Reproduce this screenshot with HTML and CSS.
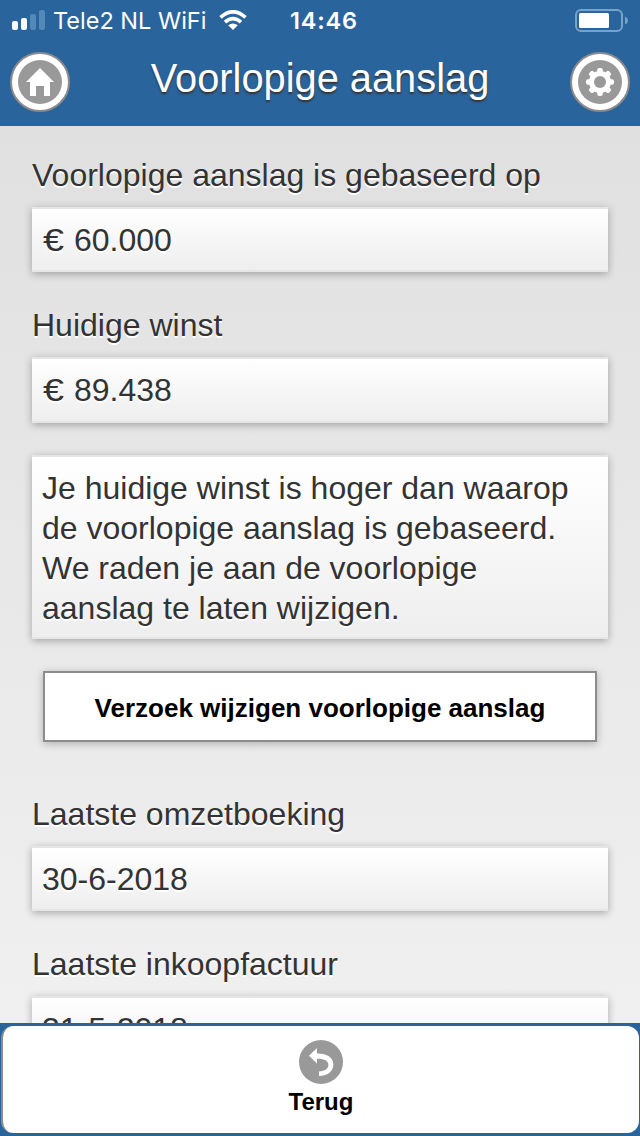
FILE: index.html
```html
<!DOCTYPE html>
<html lang="nl">
<head>
<meta charset="utf-8">
<title>Voorlopige aanslag</title>
<link rel="stylesheet" href="styles.css">
</head>
<body>
<div class="app">
  <header class="header">
    <div class="status">
      <svg class="signal" width="34" height="20" viewBox="0 0 34 20">
        <rect x="0" y="11" width="6" height="9" rx="2" fill="#fff"/>
        <rect x="9" y="8" width="6" height="12" rx="2" fill="#fff"/>
        <rect x="18" y="4" width="6" height="16" rx="2" fill="#5389b9"/>
        <rect x="27" y="0" width="6" height="20" rx="2" fill="#5389b9"/>
      </svg>
      <span class="carrier">Tele2 NL WiFi</span>
      <svg class="wifi" width="28" height="20" viewBox="0 0 28 20">
        <path d="M14 20 L9.2 15.3 Q14 11.5 18.8 15.3Z" fill="#fff"/>
        <path d="M1.5 7.4 Q14 -3.8 26.5 7.4 M6 12.2 Q14 5.2 22 12.2" fill="none" stroke="#fff" stroke-width="3.6"/>
      </svg>
      <span class="time">14:46</span>
      <svg class="battery" width="54" height="23" viewBox="0 0 54 23">
        <rect x="1" y="1" width="46" height="21" rx="5" fill="none" stroke="#75a3ca" stroke-width="2"/>
        <rect x="4" y="4" width="30" height="15" rx="1.5" fill="#fff"/>
        <path d="M50 7.5 Q53 9 53 11.5 Q53 14 50 15.5Z" fill="#75a3ca"/>
      </svg>
    </div>
    <div class="titlebar">
      <svg class="round" width="60" height="60" viewBox="0 0 60 60">
        <circle cx="30" cy="30" r="29" fill="#fff" stroke="#8b8b8b" stroke-width="2"/>
        <circle cx="30" cy="30" r="22" fill="#999"/>
        <path d="M30 16 L44 30 H40 V44 H34 V34 H26 V44 H20 V30 H16Z" fill="#fff"/>
      </svg>
      <h1 class="title">Voorlopige aanslag</h1>
      <svg class="round" width="60" height="60" viewBox="0 0 60 60">
        <circle cx="30" cy="30" r="29" fill="#fff" stroke="#8b8b8b" stroke-width="2"/>
        <circle cx="30" cy="30" r="22" fill="#999"/>
        <g fill="#fff">
          <circle cx="30" cy="30" r="11"/>
          <rect x="27.2" y="16" width="5.6" height="28" rx="2"/>
          <rect x="27.2" y="16" width="5.6" height="28" rx="2" transform="rotate(45 30 30)"/>
          <rect x="27.2" y="16" width="5.6" height="28" rx="2" transform="rotate(90 30 30)"/>
          <rect x="27.2" y="16" width="5.6" height="28" rx="2" transform="rotate(135 30 30)"/>
        </g>
        <circle cx="30" cy="30" r="6" fill="#999"/>
      </svg>
    </div>
  </header>
  <main class="content">
    <div class="label l1">Voorlopige aanslag is gebaseerd op</div>
    <div class="box"><span class="euro">€</span> 60.000</div>
    <div class="label">Huidige winst</div>
    <div class="box tall"><span class="euro">€</span> 89.438</div>
    <div class="box note">Je huidige winst is hoger dan waarop<br>de voorlopige aanslag is gebaseerd.<br>We raden je aan de voorlopige<br>aanslag te laten wijzigen.</div>
    <button class="action"><span class="action-text">Verzoek wijzigen voorlopige aanslag</span></button>
    <div class="label spaced">Laatste omzetboeking</div>
    <div class="box">30-6-2018</div>
    <div class="label">Laatste inkoopfactuur</div>
    <div class="box">31-5-2018</div>
  </main>
  <footer class="footer">
    <div class="back">
      <svg width="44" height="44" viewBox="0 0 44 44">
        <circle cx="22" cy="22" r="22" fill="#999"/>
        <path d="M10 15.8 L18 8 V13.4 C28 13.2 34.4 17.5 34.4 24.5 C34.4 31.5 28 36 20 36 V31.4 C26 31.2 29.4 28.5 29.4 25 C29.4 20.8 25 18.6 18 18.8 V23.6Z" fill="#fff"/>
      </svg>
      <span class="back-text">Terug</span>
    </div>
  </footer>
</div>
</body>
</html>
```
FILE: styles.css
```css
* { box-sizing: border-box; }
body { margin: 0; font-family: "Liberation Sans", Arial, sans-serif; }
.app {
  width: 640px; height: 1136px; overflow: hidden;
  display: flex; flex-direction: column;
}
.header { height: 126px; flex: none; background: #2a649d; color: #fff; }
.status {
  height: 40px; display: flex; align-items: center;
  padding: 1px 11px 0 12px;
  font-family: Inter, sans-serif; font-size: 23.5px; line-height: 40px;
}
.status svg { flex: none; }
.signal { margin-top: -1px; }
.carrier { width: 154px; margin-left: 7px; white-space: nowrap; letter-spacing: 0; }
.wifi { margin: -2px 0 0 12px; }
.time { margin-left: 43px; font-weight: 600; letter-spacing: 0.8px; }
.battery { margin-left: auto; }
.titlebar {
  height: 86px; padding: 12px 10px; display: flex; justify-content: space-between;
}
.title {
  margin: -1px 0 0; font-size: 39.8px; line-height: 54px; font-weight: 400; white-space: nowrap;
  text-shadow: 0 2px 2px #333;
}
.content {
  flex: 1; min-height: 0; overflow: hidden; padding: 29px 32px 0;
  background: linear-gradient(#e0e0e0, #f0f0f0);
  color: #333; font-size: 32px; line-height: 40px;
  text-shadow: 0 2px 0 #fff;
}
.label { margin: 33px 0 12px; white-space: nowrap; }
.label.l1 { margin-top: 0; }
.label.spaced { margin-top: 52px; }
.box {
  height: 65px; padding: 11px 10px 0;
  border: solid #e5e5e5; border-width: 2px 0;
  background: linear-gradient(#fff, #eee);
  box-shadow: 0 2px 8px rgba(0, 0, 0, 0.3);
  white-space: nowrap;
}
.box.tall { height: 66px; }
.box.note { height: 184px; margin-top: 32px; padding-top: 11px; }
.euro { display: inline-block; width: 23px; transform: translateX(1px) scaleX(1.18); transform-origin: left; }
.action {
  display: block; width: 554px; height: 71px; margin: 32px auto 0; padding: 4px 0 0;
  border: 2px solid #8c8c8c; background: #fff; color: #000;
  box-shadow: 0 2px 8px rgba(0, 0, 0, 0.25);
  font: bold 26px "Liberation Sans", Arial, sans-serif; white-space: nowrap;
}
.footer { height: 113px; flex: none; padding: 3px 1px; background: #2a649d; }
.back {
  height: 107px; border-radius: 12px; background: #fff;
  border-left: 2px solid #8c8c8c;
  display: flex; flex-direction: column; align-items: center; padding-top: 14px;
  font-size: 24px; font-weight: bold; line-height: 36px; color: #000;
}
.back svg { flex: none; }
```
